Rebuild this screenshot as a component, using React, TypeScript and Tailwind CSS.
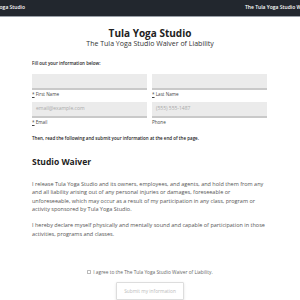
const WaiverPage = () => {
  return (
    <div className="w-[300px] h-[300px] overflow-hidden bg-white font-['Open_Sans',sans-serif] text-[#333]">
      {/* top bar */}
      <nav className="h-[17px] bg-[#22272e] border-b border-[#9aa0a8] flex items-center overflow-hidden text-white text-[5px] font-semibold whitespace-nowrap">
        <span className="-ml-[15px] w-[260px] shrink-0">Tula Yoga Studio</span>
        <span className="shrink-0">The Tula Yoga Studio Waiver of Liability</span>
      </nav>

      <div className="px-[32px]">
        <header className="text-center pt-[10px]">
          <h1 className="text-[10px] leading-[12px] font-bold text-[#222]">Tula Yoga Studio</h1>
          <p className="text-[7px] leading-[9px] text-[#333]">The Tula Yoga Studio Waiver of Liability</p>
        </header>

        <p className="mt-[12px] text-[4.5px] leading-[6px] font-semibold text-[#222]">Fill out your information below:</p>

        <div className="mt-[8px] grid grid-cols-2 gap-x-[5px] gap-y-[5px] pr-[1px]">
          <div>
            <div className="h-[16px] bg-[#ebebeb] border-b-2 border-[#c9c9c9]" />
            <label className="block mt-[1px] text-[4.6px] leading-[6px] text-[#444]">
              <abbr className="underline">*</abbr> First Name
            </label>
          </div>
          <div>
            <div className="h-[16px] bg-[#ebebeb] border-b-2 border-[#c9c9c9]" />
            <label className="block mt-[1px] text-[4.6px] leading-[6px] text-[#444]">
              <abbr className="underline">*</abbr> Last Name
            </label>
          </div>
          <div>
            <div className="h-[16px] bg-[#ebebeb] border-b-2 border-[#c9c9c9] flex items-center px-[4px] text-[5px] text-[#aaa]">
              email@example.com
            </div>
            <label className="block mt-[1px] text-[4.6px] leading-[6px] text-[#444]">
              <abbr className="underline">*</abbr> Email
            </label>
          </div>
          <div>
            <div className="h-[16px] bg-[#ebebeb] border-b-2 border-[#c9c9c9] flex items-center px-[4px] text-[5px] text-[#aaa]">
              (555) 555-1487
            </div>
            <label className="block mt-[1px] text-[4.6px] leading-[6px] text-[#444]">Phone</label>
          </div>
        </div>

        <p className="mt-[10px] text-[4.5px] leading-[6px] font-semibold text-[#222]">
          Then, read the following and submit your information at the end of the page.
        </p>

        <h2 className="mt-[16px] text-[8.5px] leading-[10px] font-bold text-[#222]">Studio Waiver</h2>

        <div className="mt-[13px] text-[5.5px] leading-[8.3px] text-[#555] space-y-[8.3px]">
          <p>
            I release Tula Yoga Studio and its owners, employees, and agents, and hold them from any
            and all liability arising out of any personal injuries or damages, foreseeable or
            unforeseeable, which may occur as a result of my participation in any class, program or
            activity sponsored by Tula Yoga Studio.
          </p>
          <p>
            I hereby declare myself physically and mentally sound and capable of participation in those
            activities, programs and classes.
          </p>
        </div>

        <div className="mt-[31px] flex items-center justify-center gap-[2px] text-[4.8px] leading-[6px] text-[#666]">
          <span className="w-[4px] h-[4px] border border-[#bbb] rounded-[0.5px]" />
          <span>I agree to the The Tula Yoga Studio Waiver of Liability.</span>
        </div>

        <div className="mt-[7px] flex justify-center">
          <button className="w-[68px] py-[5px] border border-[#ddd] rounded-[1px] shadow-sm text-[4.8px] leading-[6px] text-[#bbb] bg-white">
            Submit my information
          </button>
        </div>
      </div>
    </div>
  );
};

export default WaiverPage;
